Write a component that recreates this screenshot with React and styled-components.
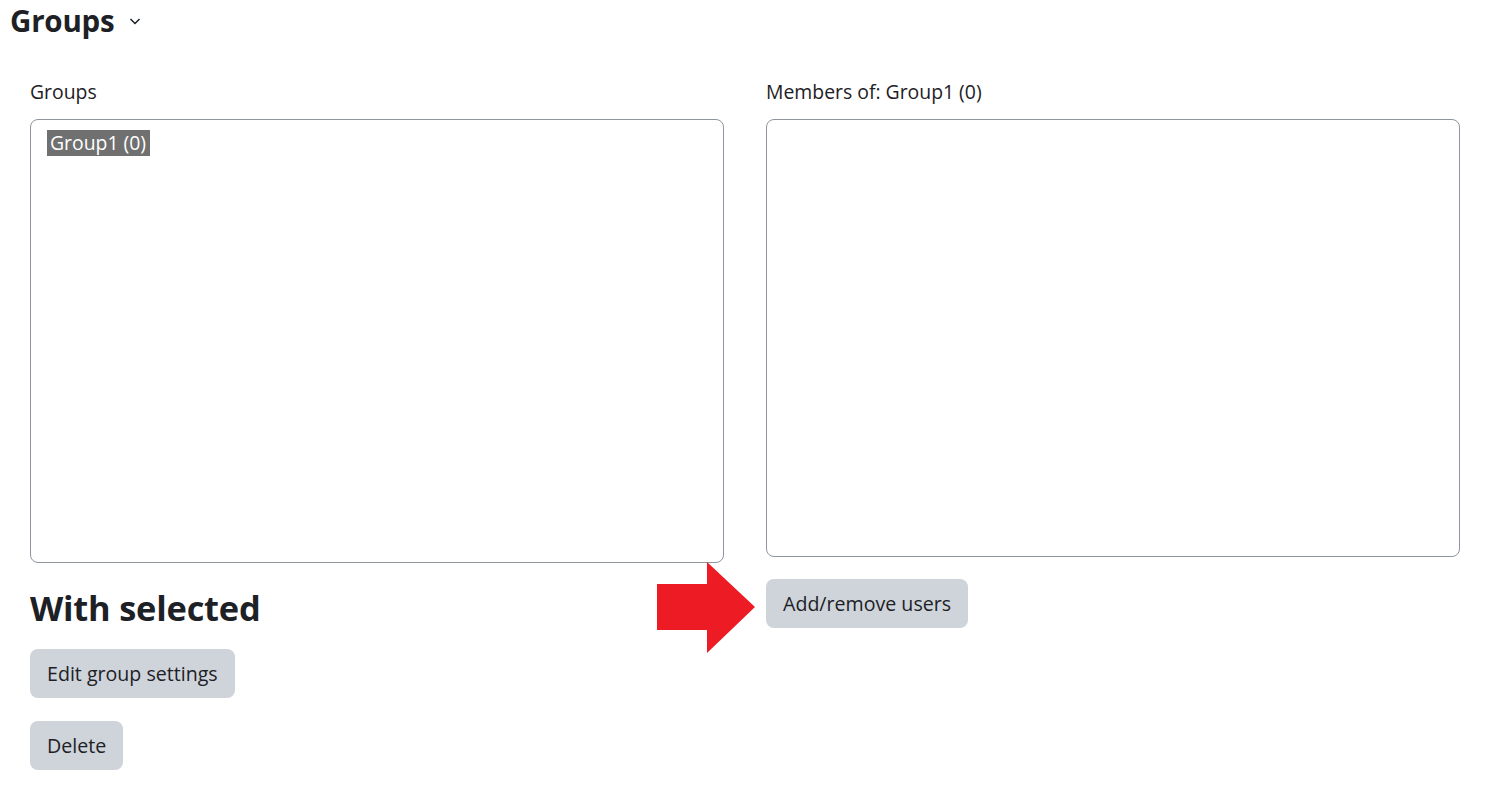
import React from 'react';
import styled, { createGlobalStyle } from 'styled-components';

const GlobalStyle = createGlobalStyle`
  body {
    margin: 0;
    background: #fff;
    font-family: "Open Sans", "Noto Sans", sans-serif;
    color: #1d2125;
  }
`

const Page = styled.div`
  padding: 3px 10px 0 10px;
`

const TitleRow = styled.div`
  display: flex;
  align-items: center;
  gap: 13px;
  height: 36px;
`

const Title = styled.h2`
  margin: 0;
  font-size: 29.5px;
  line-height: 36px;
  font-weight: 700;
  letter-spacing: -0.2px;
`

const Columns = styled.div`
  display: grid;
  grid-template-columns: 694px 694px;
  column-gap: 42px;
  padding: 40px 20px 0 20px;
`

const Column = styled.div`
  display: flex;
  flex-direction: column;
`

const Label = styled.div`
  font-size: 19.4px;
  line-height: 26px;
  margin-bottom: 14px;
`

const ListBox = styled.div`
  height: ${p => p.$h}px;
  box-sizing: border-box;
  border: 1px solid #8f959e;
  border-radius: 8px;
  padding: 10px 16px;
`

const Option = styled.span`
  display: inline-block;
  background: #707070;
  color: #fff;
  font-size: 19.4px;
  line-height: 26px;
  padding: 0 3px 0 3px;
  width: 97px;
`

const Heading = styled.h3`
  margin: 24px 0 20px 0;
  font-size: 34.4px;
  line-height: 42px;
  font-weight: 700;
  letter-spacing: -0.2px;
`

const ButtonStack = styled.div`
  display: flex;
  flex-direction: column;
  align-items: flex-start;
  gap: 23px;
`

const Button = styled.button`
  background: #ced4da;
  border: none;
  border-radius: 8px;
  height: 49px;
  padding: 0 17px;
  font-family: inherit;
  font-size: 19.6px;
  color: #1d2125;
`

const ButtonRow = styled.div`
  position: relative;
  margin-top: 22px;
`

const Arrow = styled.svg`
  position: absolute;
  left: -109px;
  top: -17px;
`

const Chevron = () => (
  <svg width="14" height="14" viewBox="0 0 14 14">
    <path d="M2.5 5 L7 9.5 L11.5 5" fill="none" stroke="#1d2125" strokeWidth="1.5" />
  </svg>
)

export default function App() {
  return (
    <>
      <GlobalStyle />
      <Page>
        <TitleRow>
          <Title>Groups</Title>
          <Chevron />
        </TitleRow>
        <Columns>
          <Column>
            <Label>Groups</Label>
            <ListBox $h={444}>
              <Option>Group1 (0)</Option>
            </ListBox>
            <Heading>With selected</Heading>
            <ButtonStack>
              <Button>Edit group settings</Button>
              <Button>Delete</Button>
            </ButtonStack>
          </Column>
          <Column>
            <Label>Members of: Group1 (0)</Label>
            <ListBox $h={438} />
            <ButtonRow>
              <Arrow width="100" height="94" viewBox="0 0 100 94">
                <polygon points="0,22 50,22 50,0 98,45 50,91 50,68 0,68" fill="#ed1c24" />
              </Arrow>
              <Button>Add/remove users</Button>
            </ButtonRow>
          </Column>
        </Columns>
      </Page>
    </>
  );
}
